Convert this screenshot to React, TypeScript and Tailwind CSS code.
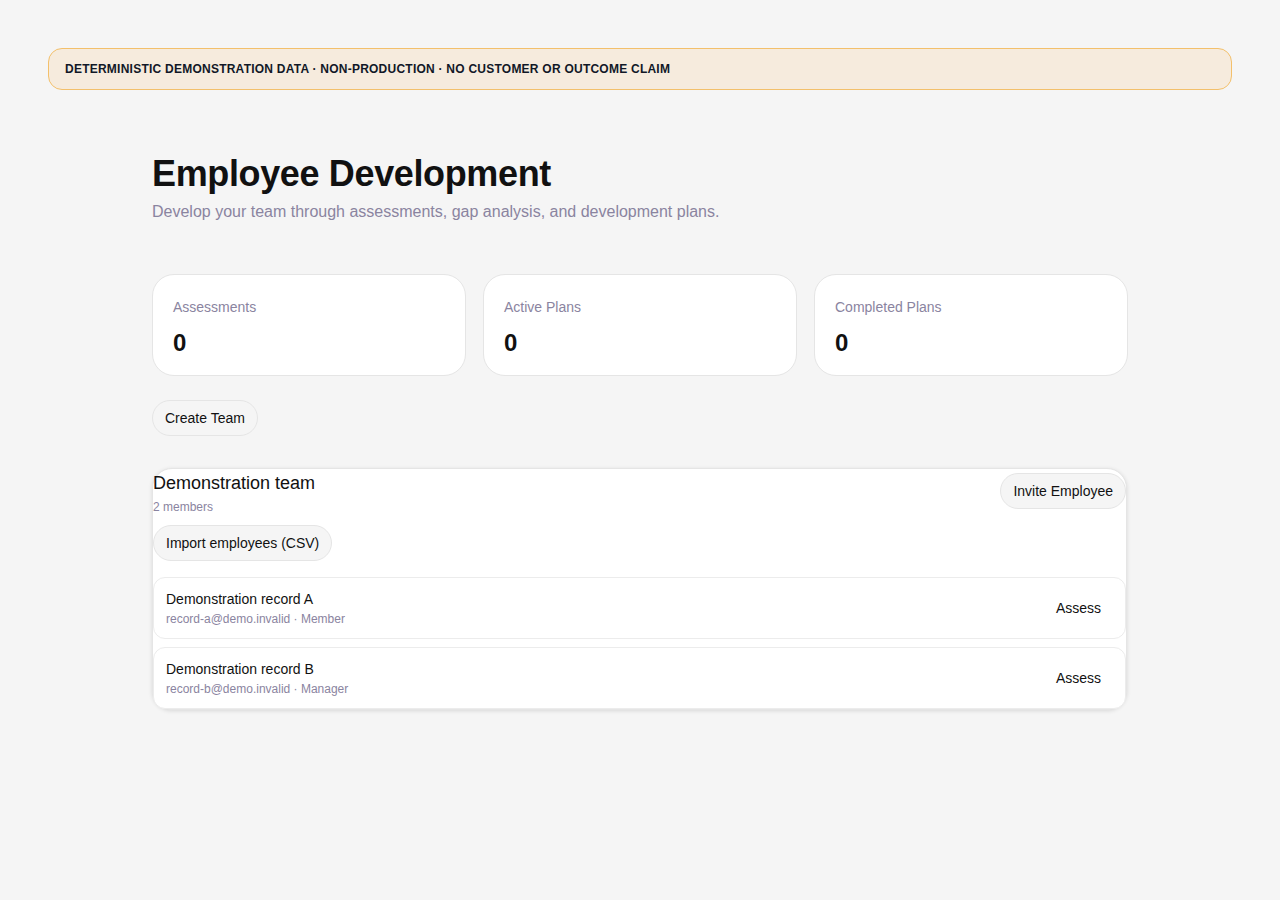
import React from 'react';

const App: React.FC = () => {
  const stats = [
    { label: 'Assessments', value: '0' },
    { label: 'Active Plans', value: '0' },
    { label: 'Completed Plans', value: '0' }
  ];

  const members = [
    { name: 'Demonstration record A', email: 'record-a@demo.invalid', role: 'Member' },
    { name: 'Demonstration record B', email: 'record-b@demo.invalid', role: 'Manager' }
  ];

  return (
    <div className="min-h-[900px] bg-[#f5f5f5] pt-12 font-[family-name:Liberation_Sans,Arial,sans-serif] text-[#111]">
      {/* Banner */}
      <div className="mx-12 h-[42px] flex items-center px-4 rounded-[14px] border border-[#f3c06b] bg-[#f6ebdd] text-xs font-bold tracking-[0.02em] text-[#111827]">
        DETERMINISTIC DEMONSTRATION DATA · NON-PRODUCTION · NO CUSTOMER OR OUTCOME CLAIM
      </div>

      <div className="w-[976px] mx-auto pt-[62px]">
        {/* Header */}
        <h1 className="text-[36px] leading-[44px] font-bold tracking-[-0.01em]">Employee Development</h1>
        <p className="mt-[4px] text-base text-[#8a84a0]">
          Develop your team through assessments, gap analysis, and development plans.
        </p>

        {/* Stats */}
        <div className="mt-[50px] grid grid-cols-3 gap-[17px]">
          {stats.map((s) => (
            <div key={s.label} className="h-[102px] bg-white border border-[#e5e5e5] rounded-[22px] px-5 pt-[22px]">
              <div className="text-sm text-[#8a84a0]">{s.label}</div>
              <div className="mt-[10px] text-2xl font-bold">{s.value}</div>
            </div>
          ))}
        </div>

        <button className="mt-[24px] h-9 px-3 rounded-full border border-[#e5e5e5] bg-[#f5f5f5] text-sm">
          Create Team
        </button>

        {/* Team */}
        <div className="mt-[32px] bg-white border border-[#e5e5e5] rounded-[20px] shadow-[0_1px_4px_rgba(0,0,0,0.12)] w-[975px]">
          <div className="flex justify-between items-start">
            <div>
              <div className="text-lg leading-6 pt-[2px]">Demonstration team</div>
              <div className="text-xs text-[#8a84a0] mt-[4px]">2 members</div>
            </div>
            <button className="mt-[4px] h-9 px-3 rounded-full border border-[#e5e5e5] bg-[#f5f5f5] text-sm">
              Invite Employee
            </button>
          </div>
          <button className="mt-[10px] h-9 px-3 rounded-full border border-[#e5e5e5] bg-[#f5f5f5] text-sm">
            Import employees (CSV)
          </button>
          <div className="mt-[16px] flex flex-col gap-[8px]">
            {members.map((m) => (
              <div key={m.name} className="h-[62px] flex items-center justify-between px-3 bg-white border border-[#ececec] rounded-xl">
                <div>
                  <div className="text-sm">{m.name}</div>
                  <div className="text-xs text-[#8a84a0] mt-[2px]">
                    {m.email} · {m.role}
                  </div>
                </div>
                <button className="px-3 text-sm">Assess</button>
              </div>
            ))}
          </div>
        </div>
      </div>
    </div>
  );
};

export default App;
